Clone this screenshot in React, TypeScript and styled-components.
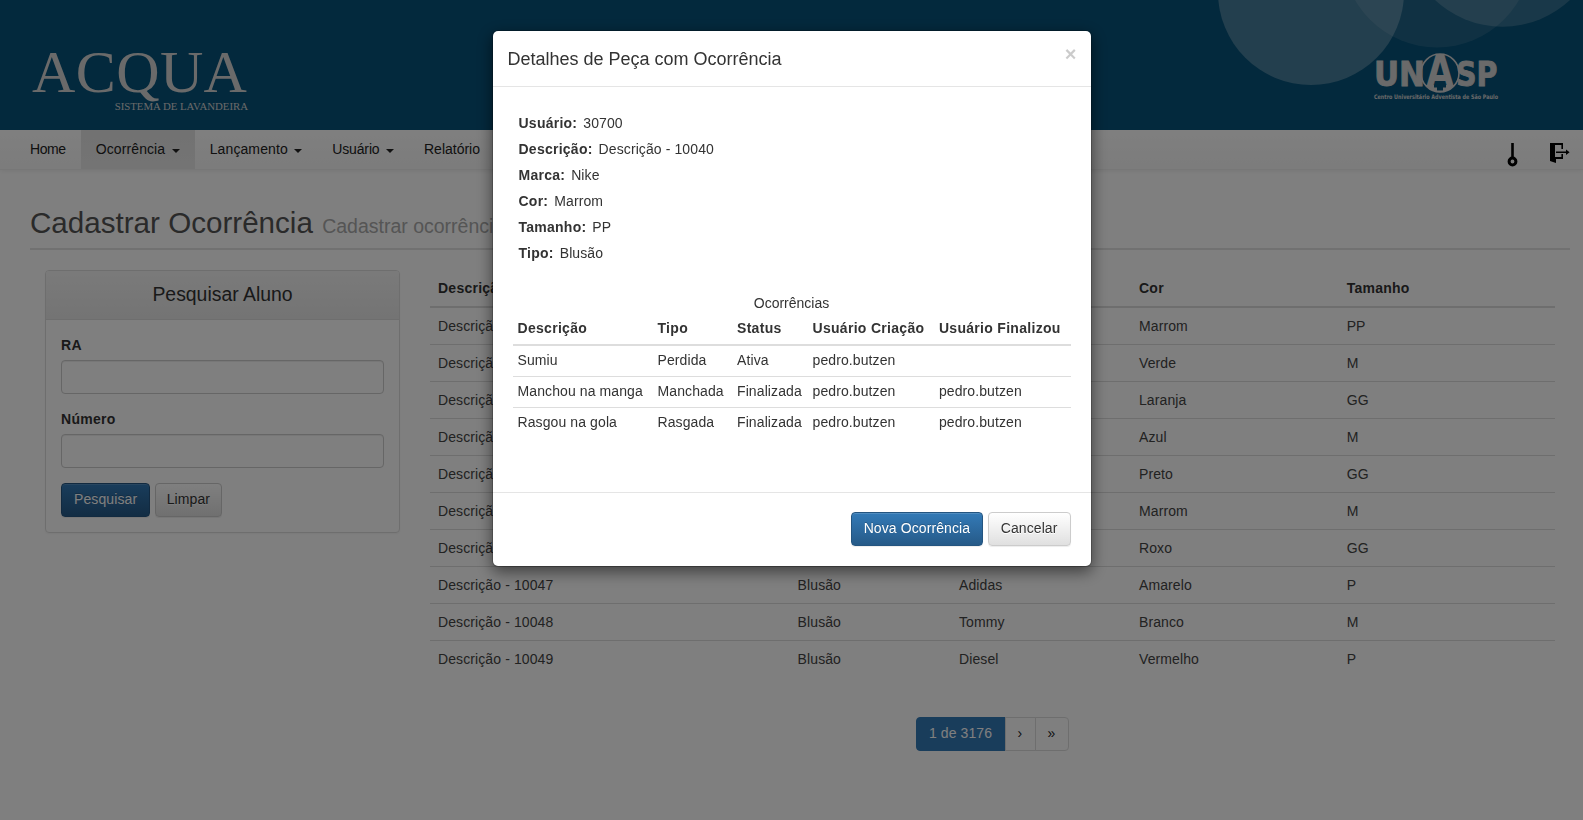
import React from "react";
import styled, { createGlobalStyle } from "styled-components";

const GlobalStyle = createGlobalStyle`
  * {
    box-sizing: border-box;
  }
  html, body {
    margin: 0;
    padding: 0;
    background: #fff;
    overflow: hidden;
  }
  body {
    font-family: "Liberation Sans", Arial, sans-serif;
    font-size: 14px;
    line-height: 1.42857;
    color: #333;
  }
`;

const Page = styled.div`
  min-height: 820px;
`;

const Banner = styled.header`
  position: relative;
  height: 130px;
  background: #07527a;
  overflow: hidden;
  display: flex;
  justify-content: space-between;
  padding: 42px 85px 0 32px;
`;

const Circles = styled.svg`
  position: absolute;
  top: 0;
  left: 0;
  width: 1583px;
  height: 130px;
`;

const Logo = styled.div`
  width: 216px;
  color: #d4d4d4;
  font-family: "Liberation Serif", "Times New Roman", serif;
  text-align: right;
`;

const LogoName = styled.div`
  font-size: 60px;
  line-height: 60px;
  letter-spacing: 0.4px;
  text-align: left;
  white-space: nowrap;
`;

const LogoTag = styled.div`
  font-size: 10.8px;
  line-height: 12px;
  margin-top: -2px;
  white-space: nowrap;
`;

const UnaspMark = styled.svg`
  position: relative;
  margin-top: 10px;
  width: 125px;
  height: 52px;
  color: #d4d4d4;
  overflow: visible;
`;

const Navbar = styled.nav`
  height: 40px;
  display: flex;
  align-items: stretch;
  padding: 0 13px 0 15px;
  background: linear-gradient(to bottom, #fff 0%, #f8f8f8 100%);
  border-bottom: 1px solid #eee;
  box-shadow: 0 1px 5px rgba(0, 0, 0, 0.075);
`;

const NavItem = styled.a<{ $active?: boolean; $track?: number }>`
  display: flex;
  align-items: center;
  padding: 0 15px;
  color: #222;
  letter-spacing: ${(p) => p.$track ?? 0.1}px;
  background: ${(p) => (p.$active ? "linear-gradient(to bottom, #e4e4e4, #e9e9e9)" : "none")};
`;

const Caret = styled.span`
  display: inline-block;
  width: 0;
  height: 0;
  margin-left: 6.5px;
  margin-top: 2px;
  border-top: 4px solid #222;
  border-left: 4px solid transparent;
  border-right: 4px solid transparent;
`;

const NavIcons = styled.div`
  margin-left: auto;
  display: flex;
  align-items: flex-start;
  gap: 32px;
  padding-top: 13px;
`;

const PageHeader = styled.div`
  margin: 36px 13px 20px 30px;
  padding-bottom: 5px;
  border-bottom: 2px solid #e2e2e2;
`;

const Title = styled.h1`
  margin: 0;
  font-size: 29.6px;
  font-weight: 400;
  line-height: 33px;
  color: #555;
  white-space: nowrap;
  small {
    font-size: 19.5px;
    color: #aaa;
    margin-left: 1px;
  }
`;

const Content = styled.main`
  display: flex;
  align-items: flex-start;
  padding: 0 28px 0 45px;
  gap: 30px;
`;

const Panel = styled.section`
  flex: 0 0 355px;
  height: 263px;
  border: 1px solid #ddd;
  border-radius: 4px;
  box-shadow: 0 1px 2px rgba(0, 0, 0, 0.05);
`;

const PanelHeading = styled.div`
  height: 49px;
  display: flex;
  align-items: center;
  justify-content: center;
  font-size: 19.4px;
  border-bottom: 1px solid #ddd;
  border-radius: 3px 3px 0 0;
  background: linear-gradient(to bottom, #f5f5f5 0%, #e8e8e8 100%);
`;

const PanelBody = styled.div`
  padding: 15px;
`;

const FieldLabel = styled.label`
  display: block;
  font-weight: 700;
  letter-spacing: 0.3px;
  padding-top: 1px;
  margin-bottom: 4px;
`;

const Input = styled.input`
  display: block;
  width: 100%;
  height: 34px;
  margin-bottom: 15px;
  border: 1px solid #ccc;
  border-radius: 4px;
  background: #fff;
  box-shadow: inset 0 1px 1px rgba(0, 0, 0, 0.075);
`;

const ButtonRow = styled.div<{ $end?: boolean }>`
  display: flex;
  gap: 5px;
  justify-content: ${(p) => (p.$end ? "flex-end" : "flex-start")};
`;

const Button = styled.button<{ $primary?: boolean; $pad?: number }>`
  height: 34px;
  padding: 0 ${(p) => p.$pad ?? 12}px;
  font: inherit;
  letter-spacing: 0.1px;
  border-radius: 4px;
  border: 1px solid ${(p) => (p.$primary ? "#245580" : "#ccc")};
  color: ${(p) => (p.$primary ? "#fff" : "#333")};
  text-shadow: ${(p) => (p.$primary ? "0 -1px 0 rgba(0,0,0,.2)" : "0 1px 0 #fff")};
  background: ${(p) =>
    p.$primary
      ? "linear-gradient(to bottom, #337ab7 0%, #265a88 100%)"
      : "linear-gradient(to bottom, #fff 0%, #e0e0e0 100%)"};
  box-shadow: inset 0 1px 0 rgba(255, 255, 255, 0.15), 0 1px 1px rgba(0, 0, 0, 0.075);
`;

const ResultColumn = styled.div`
  flex: 1;
  min-width: 0;
  padding-top: 1px;
`;

const Grid = styled.table`
  width: 100%;
  table-layout: fixed;
  border-collapse: collapse;
`;

const GridHead = styled.th<{ $width: number }>`
  width: ${(p) => p.$width}px;
  height: 36px;
  padding: 1px 8px 0;
  text-align: left;
  font-weight: 700;
  letter-spacing: 0.25px;
  border-bottom: 2px solid #ddd;
`;

const GridCell = styled.td`
  height: 37px;
  padding: 2px 8px 0;
  color: #444;
  white-space: nowrap;
  letter-spacing: 0.1px;
  border-top: 1px solid #ddd;
`;

const Pager = styled.div`
  display: flex;
  justify-content: center;
  margin-top: 40px;
`;

const PagerItem = styled.span<{ $active?: boolean; $width: number }>`
  width: ${(p) => p.$width}px;
  height: 34px;
  display: flex;
  align-items: center;
  justify-content: center;
  margin-left: -1px;
  letter-spacing: 0.1px;
  border: 1px solid ${(p) => (p.$active ? "#337ab7" : "#ddd")};
  background: ${(p) => (p.$active ? "#337ab7" : "#fff")};
  color: ${(p) => (p.$active ? "#fff" : "#222")};
  &:first-child {
    border-radius: 4px 0 0 4px;
  }
  &:last-child {
    border-radius: 0 4px 4px 0;
  }
`;

const Backdrop = styled.div`
  position: fixed;
  inset: 0;
  background: rgba(0, 0, 0, 0.5);
`;

const ModalLayer = styled.div`
  position: fixed;
  inset: 0;
  display: flex;
  justify-content: center;
  align-items: flex-start;
  padding-top: 30px;
`;

const Modal = styled.div`
  width: 600px;
  background: #fff;
  background-clip: padding-box;
  border: 1px solid rgba(0, 0, 0, 0.2);
  border-radius: 6px;
  box-shadow: 0 5px 15px rgba(0, 0, 0, 0.5);
`;

const ModalHeader = styled.div`
  display: flex;
  align-items: flex-start;
  justify-content: space-between;
  padding: 16px 14px 14px 15px;
  border-bottom: 1px solid #e5e5e5;
`;

const ModalTitle = styled.h4`
  margin: 0;
  font-size: 18px;
  font-weight: 400;
  line-height: 25px;
`;

const CloseMark = styled.span`
  margin-top: -3px;
  font-size: 20px;
  font-weight: 700;
  line-height: 1;
  color: #000;
  opacity: 0.2;
  text-shadow: 0 1px 0 #fff;
`;

const ModalBody = styled.div`
  padding: 21px 20px 54px;
`;

const Details = styled.div`
  padding: 6px 6px 0;
`;

const Detail = styled.div`
  height: 26px;
  letter-spacing: 0.1px;
  b {
    margin-right: 6px;
    letter-spacing: 0.25px;
  }
`;

const InnerTable = styled.table`
  width: 100%;
  margin-top: 23px;
  table-layout: fixed;
  border-collapse: collapse;
  caption {
    caption-side: top;
    padding: 0 0 1px;
    text-align: center;
    line-height: 20px;
  }
`;

const InnerHead = styled.th<{ $width: number }>`
  width: ${(p) => p.$width}px;
  padding: 5px;
  text-align: left;
  font-weight: 700;
  letter-spacing: 0.3px;
  white-space: nowrap;
  border-bottom: 2px solid #ddd;
`;

const InnerCell = styled.td`
  height: 31px;
  padding: 5px;
  white-space: nowrap;
  letter-spacing: 0.1px;
  border-top: 1px solid #ddd;
`;

const ModalFooter = styled.div`
  padding: 19px 20px 20px;
  border-top: 1px solid #e5e5e5;
`;

const gridRows = [
  ["Descrição - 10040", "Blusão", "Nike", "Marrom", "PP"],
  ["Descrição - 10041", "Blusão", "Puma", "Verde", "M"],
  ["Descrição - 10042", "Blusão", "Lacoste", "Laranja", "GG"],
  ["Descrição - 10043", "Blusão", "Hering", "Azul", "M"],
  ["Descrição - 10044", "Blusão", "Nike", "Preto", "GG"],
  ["Descrição - 10045", "Blusão", "Puma", "Marrom", "M"],
  ["Descrição - 10046", "Blusão", "Hering", "Roxo", "GG"],
  ["Descrição - 10047", "Blusão", "Adidas", "Amarelo", "P"],
  ["Descrição - 10048", "Blusão", "Tommy", "Branco", "M"],
  ["Descrição - 10049", "Blusão", "Diesel", "Vermelho", "P"],
];

const details = [
  ["Usuário:", "30700"],
  ["Descrição:", "Descrição - 10040"],
  ["Marca:", "Nike"],
  ["Cor:", "Marrom"],
  ["Tamanho:", "PP"],
  ["Tipo:", "Blusão"],
];

const occurrences = [
  ["Sumiu", "Perdida", "Ativa", "pedro.butzen", ""],
  ["Manchou na manga", "Manchada", "Finalizada", "pedro.butzen", "pedro.butzen"],
  ["Rasgou na gola", "Rasgada", "Finalizada", "pedro.butzen", "pedro.butzen"],
];

const KeyIcon = () => (
  <svg width="11" height="24" viewBox="0 0 11 24">
    <path d="M4.2 0h2.6v16H4.2z" fill="#000" />
    <circle cx="5.5" cy="18.5" r="3.4" fill="none" stroke="#000" strokeWidth="3" />
  </svg>
);

const ExitIcon = () => (
  <svg width="20" height="20" viewBox="0 0 20 20">
    <path d="M0 0h13v2H5v12h8v2H6v4l-6-2z" fill="#000" />
    <path d="M11.4 2h1.6v4h-1.6zM11.4 11h1.6v3h-1.6z" fill="#000" />
    <path d="M6 8.4h10V6.4l3.6 2.8-3.6 2.8V10H6z" fill="#000" />
  </svg>
);

const App = () => {
  return (
    <Page>
      <GlobalStyle />
      <Banner>
        <Circles viewBox="0 0 1583 130">
          <circle cx="1311" cy="-8" r="93" fill="rgba(255,255,255,.26)" />
          <circle cx="1437" cy="-47" r="94.5" fill="rgba(255,255,255,.1)" />
          <circle cx="1502.5" cy="-72" r="98.7" fill="rgba(255,255,255,.18)" />
        </Circles>
        <Logo>
          <LogoName>ACQUA</LogoName>
          <LogoTag>SISTEMA DE LAVANDEIRA</LogoTag>
        </Logo>
        <UnaspMark viewBox="0 0 125 52">
          <g fill="currentColor" fontFamily="'DejaVu Sans', 'Liberation Sans', sans-serif" fontWeight="700">
            <g stroke="currentColor" strokeWidth="0.9">
              <text x="1" y="34" fontSize="33" textLength="51" lengthAdjust="spacingAndGlyphs">UN</text>
              <text x="83" y="34" fontSize="33" textLength="41.5" lengthAdjust="spacingAndGlyphs">SP</text>
            </g>
            <circle cx="67" cy="21" r="19" fill="none" stroke="currentColor" strokeWidth="1.6" />
            <text x="53" y="35" fontSize="44" textLength="28" lengthAdjust="spacingAndGlyphs">A</text>
            <path d="M52.3 33A19 19 0 0 0 81.7 33z" />
            <path d="M61 33h12v2.5h-3v3h-6v-3h-3z" fill="#07527a" />
            <text x="1" y="47" fontSize="6.2" textLength="124" lengthAdjust="spacingAndGlyphs">Centro Universitário Adventista de São Paulo</text>
          </g>
        </UnaspMark>
      </Banner>
      <Navbar>
        <NavItem $track={-0.4}>Home</NavItem>
        <NavItem $active>Ocorrência<Caret /></NavItem>
        <NavItem>Lançamento<Caret /></NavItem>
        <NavItem $track={-0.15}>Usuário<Caret /></NavItem>
        <NavItem $track={0}>Relatório</NavItem>
        <NavIcons>
          <KeyIcon />
          <ExitIcon />
        </NavIcons>
      </Navbar>
      <PageHeader>
        <Title>
          Cadastrar Ocorrência <small>Cadastrar ocorrência</small>
        </Title>
      </PageHeader>
      <Content>
        <Panel>
          <PanelHeading>Pesquisar Aluno</PanelHeading>
          <PanelBody>
            <FieldLabel>RA</FieldLabel>
            <Input />
            <FieldLabel>Número</FieldLabel>
            <Input />
            <ButtonRow>
              <Button $primary $pad={12}>Pesquisar</Button>
              <Button $pad={10.5}>Limpar</Button>
            </ButtonRow>
          </PanelBody>
        </Panel>
        <ResultColumn>
          <Grid>
            <thead>
              <tr>
                <GridHead $width={359.6}>Descrição</GridHead>
                <GridHead $width={161.4}>Tipo</GridHead>
                <GridHead $width={180}>Marca</GridHead>
                <GridHead $width={207.7}>Cor</GridHead>
                <GridHead $width={216.3}>Tamanho</GridHead>
              </tr>
            </thead>
            <tbody>
              {gridRows.map((row) => (
                <tr key={row[0]}>
                  {row.map((value, i) => (
                    <GridCell key={i}>{value}</GridCell>
                  ))}
                </tr>
              ))}
            </tbody>
          </Grid>
          <Pager>
            <PagerItem $active $width={90}>1 de 3176</PagerItem>
            <PagerItem $width={31}>›</PagerItem>
            <PagerItem $width={34}>»</PagerItem>
          </Pager>
        </ResultColumn>
      </Content>
      <Backdrop />
      <ModalLayer>
        <Modal>
          <ModalHeader>
            <ModalTitle>Detalhes de Peça com Ocorrência</ModalTitle>
            <CloseMark>×</CloseMark>
          </ModalHeader>
          <ModalBody>
            <Details>
              {details.map(([label, value]) => (
                <Detail key={label}>
                  <b>{label}</b>
                  {value}
                </Detail>
              ))}
            </Details>
            <InnerTable>
              <caption>Ocorrências</caption>
              <thead>
                <tr>
                  <InnerHead $width={140}>Descrição</InnerHead>
                  <InnerHead $width={79.5}>Tipo</InnerHead>
                  <InnerHead $width={75.5}>Status</InnerHead>
                  <InnerHead $width={126.4}>Usuário Criação</InnerHead>
                  <InnerHead $width={136.6}>Usuário Finalizou</InnerHead>
                </tr>
              </thead>
              <tbody>
                {occurrences.map((row) => (
                  <tr key={row[0]}>
                    {row.map((value, i) => (
                      <InnerCell key={i}>{value}</InnerCell>
                    ))}
                  </tr>
                ))}
              </tbody>
            </InnerTable>
          </ModalBody>
          <ModalFooter>
            <ButtonRow $end>
              <Button $primary $pad={11.5}>Nova Ocorrência</Button>
              <Button>Cancelar</Button>
            </ButtonRow>
          </ModalFooter>
        </Modal>
      </ModalLayer>
    </Page>
  );
};

export default App;
